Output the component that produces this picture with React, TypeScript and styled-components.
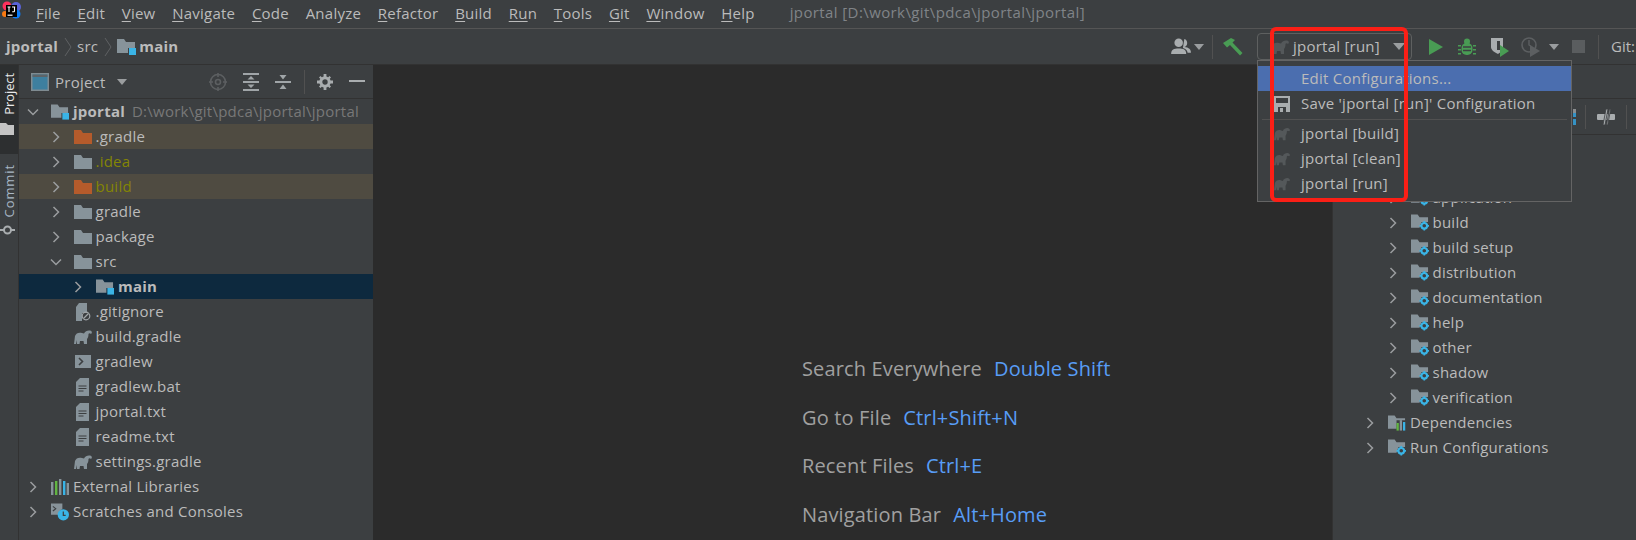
import React from "react";
import styled, { createGlobalStyle } from "styled-components";

const Global = createGlobalStyle`
  html, body { margin: 0; padding: 0; background: #3c3f41; overflow: hidden; }
  #root { width: 1636px; height: 540px; }
  * { box-sizing: border-box; }
`;

const Frame = styled.div`
  position: relative; width: 1636px; height: 540px; overflow: hidden;
  display: flex; flex-direction: column;
  background: #3c3f41; color: #bbbbbb;
  font-family: "Open Sans", "Noto Sans", sans-serif; font-size: 15px; letter-spacing: 0.24px;
`;
const MenuBar = styled.div`
  height: 29px; flex: none; display: flex; align-items: center; border-bottom: 1px solid #555555; padding-left: 2px;
`;
const LogoBox = styled.span`width: 20px; height: 20px; margin: 0 14px 6px 0; flex: none; display: flex;`;
const MenuList = styled.nav`display: flex; gap: 16.7px; padding-bottom: 3px;`;
const MenuItem = styled.span`u { text-underline-offset: 2px; }`;
const WindowTitle = styled.span`margin-left: 35px; color: #808488; padding-bottom: 4px; letter-spacing: 0.4px;`;

const NavBar = styled.div`
  height: 36px; flex: none; display: flex; align-items: center; border-bottom: 1px solid #323232; padding-left: 6px;
`;
const Crumb = styled.span<{ $bold?: boolean }>`
  font-weight: ${p => (p.$bold ? 700 : 400)}; white-space: nowrap; padding-bottom: 2px;
`;
const CrumbSep = styled.span`display: flex; width: 19px; justify-content: center; flex: none;`;
const CrumbMain = styled(Crumb)`margin-left: 3px;`;
const NavSpacer = styled.span`flex: 1;`;
const NavTools = styled.div`display: flex; align-items: center; height: 100%; width: 465px; flex: none;`;
const ToolSlot = styled.span<{ $w: number; $ml?: number }>`
  width: ${p => p.$w}px; margin-left: ${p => p.$ml ?? 0}px; flex: none; display: flex; align-items: center; justify-content: center;
`;
const ToolDivider = styled.span<{ $h?: number; $ml?: number }>`
  width: 1px; height: ${p => p.$h ?? 24}px; margin-left: ${p => p.$ml ?? 0}px; background: #515151; flex: none;
`;
const RunCombo = styled.div`
  width: 155px; height: 27px; flex: none; margin: 0 17px 0 14px; border: 1px solid #5e6060; border-radius: 4px;
  display: flex; align-items: center; padding-left: 13px; gap: 4px; white-space: nowrap;
`;
const ComboCaret = styled.span`
  width: 0; height: 0; margin-left: 9px; border-left: 6px solid transparent; border-right: 6px solid transparent; border-top: 7px solid #9a9d9f;
`;
const ComboText = styled.span`padding-bottom: 2px;`;
const GitLabel = styled.span`white-space: nowrap; margin-left: 12px; letter-spacing: 0; padding-bottom: 2px;`;

const Workspace = styled.div`flex: 1; display: flex; min-height: 0;`;
const LeftStrip = styled.aside`
  width: 19px; flex: none; display: flex; flex-direction: column; border-right: 1px solid #323232;
`;
const StripTab = styled.div<{ $active?: boolean; $h: number }>`
  height: ${p => p.$h}px; display: flex; flex-direction: column; align-items: flex-start; gap: 8px;
  padding-top: ${p => (p.$active ? 8 : 10)}px;
  background: ${p => (p.$active ? "#2d2f30" : "transparent")};
  color: ${p => (p.$active ? "#e8e8e8" : "#a9b7c6")};
`;
const StripLabel = styled.span<{ $spacing: number }>`
  writing-mode: vertical-rl; transform: rotate(180deg); font-size: 13px; line-height: 18px; letter-spacing: ${p => p.$spacing}px;
`;

const ProjectPanel = styled.section`width: 354px; flex: none; display: flex; flex-direction: column; overflow: hidden;`;
const PanelHeader = styled.header`
  height: 34px; flex: none; display: flex; align-items: center; border-bottom: 1px solid #323232; padding-left: 12px;
`;
const PanelTitle = styled.span`margin-left: 6px; width: 60px; white-space: nowrap;`;
const CaretSmall = styled.span`
  width: 0; height: 0; margin-left: 2px; border-left: 5px solid transparent; border-right: 5px solid transparent; border-top: 6px solid #9a9d9f;
`;
const HeaderSpacer = styled.span`flex: 1;`;
const HeaderTool = styled.span<{ $w: number }>`width: ${p => p.$w}px; flex: none; display: flex; justify-content: center;`;
const Tree = styled.div`display: flex; flex-direction: column;`;
const Row = styled.div<{ $base: number; $depth: number; $bg?: string }>`
  height: 25px; flex: none; display: flex; align-items: center; white-space: nowrap;
  padding-left: ${p => p.$base + p.$depth * 22.5}px;
  background: ${p => p.$bg ?? "transparent"};
`;
const ChevBox = styled.span`width: 22px; height: 25px; flex: none; display: flex; align-items: center; justify-content: center;`;
const IconBox = styled.span`width: 18px; margin-left: 7px; margin-right: 4px; flex: none; display: flex; justify-content: center;`;
const RowLabel = styled.span<{ $color?: string; $bold?: boolean }>`
  color: ${p => p.$color ?? "#bbbbbb"}; font-weight: ${p => (p.$bold ? 700 : 400)}; padding-bottom: 2px;
`;
const RowHint = styled.span`color: #787878; margin-left: 7px; padding-bottom: 2px;`;

const Editor = styled.main`
  width: 960px; flex: none; background: #2b2b2b; border-right: 1px solid #323232;
  display: flex; flex-direction: column; padding: 291px 0 0 429px; gap: 23.7px; overflow: hidden;
`;
const Hint = styled.div`font-size: 20px; letter-spacing: 0.15px; line-height: 25px; color: #a0a0a0; white-space: nowrap; display: flex; gap: 12px;`;
const Keys = styled.span`color: #589df6;`;

const GradlePanel = styled.section`flex: 1; display: flex; flex-direction: column; min-width: 0;`;
const GradleHead = styled.div`height: 34px; flex: none; border-bottom: 1px solid #323232;`;
const GradleBar = styled.div`
  height: 36px; flex: none; display: flex; align-items: center; border-bottom: 1px solid #323232; padding-left: 240px;
`;
const BlueMark = styled.span`width: 3px; height: 16px; background: linear-gradient(#8a8d8f 25%, #3592c4 25% 50%, #3c3f41 50% 62%, #3592c4 62%); flex: none;`;

const Popup = styled.div`
  position: absolute; left: 1257px; top: 60px; width: 315px; height: 142px; background: #3c3f41; border: 1px solid #646464;
  padding-top: 5px; display: flex; flex-direction: column;
`;
const PopupItem = styled.div<{ $active?: boolean }>`
  height: 25px; flex: none; display: flex; align-items: center; padding-left: 16px; gap: 11px; white-space: nowrap;
  background: ${p => (p.$active ? "#4b6eaf" : "transparent")};
`;
const PopupIcon = styled.span`width: 16px; flex: none; display: flex; justify-content: center;`;
const PopupText = styled.span`padding-bottom: 2px;`;
const PopupDivider = styled.div`height: 1px; background: #515151; margin: 3px 4px 1px;`;
const RedMark = styled.div`
  position: absolute; left: 1270px; top: 27px; width: 138px; height: 175px; border: 4px solid #fb1f16; border-radius: 6px; pointer-events: none;
`;

const Chevron = ({ open }: { open?: boolean }) => (
  <svg width="12" height="12" viewBox="0 0 12 12" fill="none" stroke="#9a9d9f" strokeWidth="1.5">
    <path d={open ? "M1 3.5 6 8.5 11 3.5" : "M3.5 1 8.5 6 3.5 11"} />
  </svg>
);
const FolderShape = ({ fill = "#87939a" }: { fill?: string }) => (
  <svg width="18" height="14" viewBox="0 0 18 14"><path d="M0 0h7l2 3h9v11H0z" fill={fill} /></svg>
);
const ModuleFolder = () => (
  <svg width="19" height="16" viewBox="0 0 19 16">
    <path d="M0 0h7l2 3h9v6h-7v5H0z" fill="#87939a" />
    <rect x="12" y="9" width="7" height="7" fill="#3ab4e6" />
  </svg>
);
const Gear = ({ x, y }: { x: number; y: number }) => (
  <g transform={`translate(${x} ${y})`}>
    <circle r="3" fill="none" stroke="#3ab4e6" strokeWidth="2.2" />
    <path d="M-.9-5h1.8v2h-1.8zM-.9 3h1.8v2h-1.8zM-5-.9h2v1.8h-2zM3-.9h2v1.8h-2z" fill="#3ab4e6" />
  </g>
);
const TaskFolder = () => (
  <svg width="19" height="17" viewBox="0 0 19 17">
    <path d="M0 0h7l2 3h9v5h-7l-2 6H0z" fill="#87939a" />
    <Gear x={14} y={12} />
  </svg>
);
const DepsFolder = () => (
  <svg width="19" height="16" viewBox="0 0 19 16">
    <path d="M0 0h7l2 3h9v2h-9v9H0z" fill="#87939a" />
    <rect x="9" y="8" width="2.4" height="8" fill="#62b543" />
    <rect x="12.4" y="5" width="2.4" height="11" fill="#87939a" />
    <rect x="15.8" y="7" width="2.4" height="9" fill="#3ab4e6" />
  </svg>
);
const Elephant = ({ fill = "#87939a", w = 18 }: { fill?: string; w?: number }) => (
  <svg width={w} height={(w * 14) / 18} viewBox="0 0 18 14">
    <path
      d="M0 14 1 6C2 3 5 2 8 3L10 3.500C11 1 14 0 16 .5 18 1 18.500 3 17 4 16 3 15 3 14.500 4 14.500 6 14 8 13 9L13 14H10L9.500 11H6L5.500 14H3L3 10 2 14Z"
      fill={fill}
    />
  </svg>
);
const TextFile = () => (
  <svg width="13" height="18" viewBox="0 0 13 18">
    <path d="M4 0h9v18H0V4z" fill="#87939a" />
    <path d="M2.5 8h8M2.5 10.5h8M2.5 13h5" stroke="#3c3f41" strokeWidth="1" />
  </svg>
);
const IgnoreFile = () => (
  <svg width="16" height="18" viewBox="0 0 16 18">
    <path d="M4 0h8v10H7v8H1V4z" fill="#87939a" />
    <circle cx="11" cy="13" r="3.8" fill="none" stroke="#a0a5a8" strokeWidth="1.2" />
    <path d="M8.5 15.5 13.5 10.5" stroke="#a0a5a8" strokeWidth="1.2" />
  </svg>
);
const ShellFile = () => (
  <svg width="16" height="13" viewBox="0 0 16 13">
    <rect width="16" height="13" fill="#87939a" />
    <path d="M4 3l3.5 3.5L4 10" stroke="#3c3f41" strokeWidth="1.6" fill="none" />
  </svg>
);
const LibIcon = () => (
  <svg width="18" height="16" viewBox="0 0 18 16">
    <rect x="0" y="3" width="2.4" height="13" fill="#87939a" />
    <rect x="4" y="2" width="2.4" height="14" fill="#62b543" />
    <rect x="8" y="0" width="2.4" height="16" fill="#87939a" />
    <rect x="12" y="2" width="2.4" height="14" fill="#3ab4e6" />
    <rect x="15.6" y="4" width="2.4" height="12" fill="#87939a" />
  </svg>
);
const ScratchIcon = () => (
  <svg width="19" height="18" viewBox="0 0 19 18">
    <path d="M0 0h12v6a6 6 0 0 0-4 6H0z" fill="#87939a" />
    <path d="M2 3l3 2.5L2 8" stroke="#3c3f41" strokeWidth="1.2" fill="none" />
    <circle cx="13" cy="12" r="6" fill="#3ab4e6" />
    <path d="M13 8.5V12.5H15.5" stroke="#3c3f41" strokeWidth="1.3" fill="none" />
  </svg>
);
const Logo = () => (
  <svg width="20" height="20" viewBox="0 0 20 20">
    <circle cx="5" cy="5" r="4.500" fill="#fe315d" />
    <circle cx="14" cy="6" r="5" fill="#5a63d8" />
    <circle cx="3" cy="13" r="3" fill="#f97a12" />
    <circle cx="14" cy="13" r="4.500" fill="#087cfa" />
    <rect x="4" y="4" width="11" height="12" fill="#000" />
    <rect x="5.5" y="13.6" width="5" height="1.2" fill="#fff" />
    <path d="M5.500 6h3M7 6v5M10 6h3.200M12.500 6v3.700c0 1-.6 1.300-2.300 1" stroke="#fff" strokeWidth="1.100" fill="none" />
  </svg>
);
const ProjectIcon = () => (
  <svg width="18" height="18" viewBox="0 0 18 18">
    <rect x=".75" y=".75" width="16.5" height="16.5" fill="#3d7f9f" stroke="#7f8b91" strokeWidth="1.5" />
    <rect x="1.5" y="1.5" width="15" height="2.5" fill="#5d6468" />
  </svg>
);
const Locate = () => (
  <svg width="18" height="18" viewBox="0 0 18 18" fill="none" stroke="#5c5f61" strokeWidth="1.6">
    <circle cx="9" cy="9" r="7.5" /><circle cx="9" cy="9" r="2.5" />
    <path d="M9 0v4M9 14v4M0 9h4M14 9h4" />
  </svg>
);
const ExpandAll = () => (
  <svg width="16" height="18" viewBox="0 0 16 18" fill="#a0a5a8">
    <rect width="16" height="2" /><rect y="16" width="16" height="2" /><rect y="8" width="16" height="2" />
    <path d="M8 3l3.5 3.5h-7zM8 15l3.5-3.5h-7z" />
  </svg>
);
const CollapseAll = () => (
  <svg width="16" height="18" viewBox="0 0 16 18" fill="#a0a5a8">
    <rect y="8" width="16" height="2" />
    <path d="M4.5 2 8 6.5 11.5 2zM4.5 16 8 11.5 11.5 16z" />
  </svg>
);
const Cog = ({ size = 16 }: { size?: number }) => (
  <svg width={size} height={size} viewBox="0 0 16 16">
    <circle cx="8" cy="8" r="4.2" fill="none" stroke="#a9adaf" strokeWidth="3" />
    <path d="M6.6 0h2.8v3H6.6zM6.6 13h2.8v3H6.6zM0 6.6h3v2.8H0zM13 6.6h3v2.8h-3zM2 3.5 3.5 2l2 2L4 5.500zM10.500 12l1.500-1.500 2 2-1.500 1.500zM12.500 2 14 3.500l-2 2L10.500 4zM4 10.500 5.500 12l-2 2L2 12.500z" fill="#a9adaf" />
  </svg>
);
const Minus = () => <svg width="16" height="3" viewBox="0 0 16 3"><rect width="16" height="2" fill="#a9adaf" /></svg>;
const Person = () => (
  <svg width="21" height="17" viewBox="0 0 22 18" fill="#a9adaf">
    <circle cx="8" cy="5" r="4.500" /><path d="M0 17c0-5 3-6 8-6s8 1 8 6z" />
    <path d="M14 1a4.500 4.500 0 0 1 0 8.500c5 .5 7 2.500 7 6h-3.500c-.5-2.500-2-4-5-5z" />
  </svg>
);
const Hammer = () => (
  <svg width="20" height="18" viewBox="0 0 20 18" fill="#499c54">
    <path d="M0 5 8 0l4 2-2.500 2.500L19.500 15 17 17.500 7 7 4 9.500z" />
  </svg>
);
const RunIcon = () => <svg width="14" height="16" viewBox="0 0 14 16"><path d="M0 0l14 8L0 16z" fill="#499c54" /></svg>;
const BugIcon = () => (
  <svg width="18" height="18" viewBox="0 0 18 18" fill="#499c54">
    <rect x="3.500" y="5" width="11" height="12" rx="5" />
    <circle cx="9" cy="3.500" r="3" />
    <path d="M0 7h3v1.500H0zM15 7h3v1.500h-3zM0 11h3v1.500H0zM15 11h3v1.500h-3zM0 15h3v1.500H0zM15 15h3v1.500h-3z" />
    <path d="M5 9h8M5 12.500h8" stroke="#3c3f41" strokeWidth="1.300" />
  </svg>
);
const Coverage = () => (
  <svg width="20" height="20" viewBox="0 0 20 20">
    <path d="M1 1h12v9c0 3-2 5-5 7C4 15 1 13 1 10z" fill="#a9adaf" />
    <path d="M7 4h3v9H7z" fill="#3c3f41" />
    <path d="M10 8l9 6-9 6z" fill="#499c54" />
  </svg>
);
const Profile = () => (
  <svg width="20" height="20" viewBox="0 0 20 20" fill="none">
    <circle cx="8" cy="8" r="7" stroke="#5c5f61" strokeWidth="1.600" />
    <path d="M8 3v5l3 2" stroke="#5c5f61" strokeWidth="1.400" />
    <path d="M9 8l10 6-10 6z" fill="#5c5f61" />
  </svg>
);
const Stop = () => <svg width="13" height="13" viewBox="0 0 13 13"><rect width="13" height="13" fill="#5a5d5f" /></svg>;
const Floppy = () => (
  <svg width="16" height="16" viewBox="0 0 16 16">
    <path d="M0 0h16v16H0z" fill="#a9adaf" />
    <rect x="2" y="2" width="12" height="5" fill="#3c3f41" />
    <rect x="4" y="11" width="8" height="5" fill="#3c3f41" />
    <rect x="6" y="12" width="3" height="4" fill="#a9adaf" />
  </svg>
);
const NoLink = () => (
  <svg width="18" height="18" viewBox="0 0 18 18" fill="#a9adaf">
    <rect x="0" y="6" width="18" height="6" rx="1" />
    <path d="M6 17 9 1h2L8 17zM9.500 17 12.500 1h1.200l-3 16z" stroke="#3c3f41" strokeWidth=".8" />
  </svg>
);
const StripFolder = () => <svg width="14" height="12" viewBox="0 0 14 12"><path d="M0 0h6l2 2h6v10H0z" fill="#c4c4c4" /></svg>;
const StripCommit = () => (
  <svg width="15" height="10" viewBox="0 0 15 10" fill="none" stroke="#a9adaf" strokeWidth="2">
    <circle cx="7.500" cy="5" r="3.500" /><path d="M0 5h4M11 5h4" />
  </svg>
);
const Breadcrumb = () => (
  <svg width="8" height="18" viewBox="0 0 8 18" fill="none" stroke="#5f6264" strokeWidth="1"><path d="M1 0l6 9-6 9" /></svg>
);

type Node = {
  label: string; depth: number; icon: React.ReactNode; chev?: "open" | "closed"; color?: string; bold?: boolean; bg?: string; hint?: string;
};
const TINT = "#4f4b41";
const OLIVE = "#848504";
const RUST = "#b55b2b";
const projectNodes: Node[] = [
  { label: "jportal", depth: 0, icon: <ModuleFolder />, chev: "open", bold: true, hint: "D:\\work\\git\\pdca\\jportal\\jportal" },
  { label: ".gradle", depth: 1, icon: <FolderShape fill={RUST} />, chev: "closed", bg: TINT },
  { label: ".idea", depth: 1, icon: <FolderShape />, chev: "closed", color: OLIVE },
  { label: "build", depth: 1, icon: <FolderShape fill={RUST} />, chev: "closed", color: OLIVE, bg: TINT },
  { label: "gradle", depth: 1, icon: <FolderShape />, chev: "closed" },
  { label: "package", depth: 1, icon: <FolderShape />, chev: "closed" },
  { label: "src", depth: 1, icon: <FolderShape />, chev: "open" },
  { label: "main", depth: 2, icon: <ModuleFolder />, chev: "closed", bold: true, bg: "#0d293e" },
  { label: ".gitignore", depth: 1, icon: <IgnoreFile /> },
  { label: "build.gradle", depth: 1, icon: <Elephant /> },
  { label: "gradlew", depth: 1, icon: <ShellFile /> },
  { label: "gradlew.bat", depth: 1, icon: <TextFile /> },
  { label: "jportal.txt", depth: 1, icon: <TextFile /> },
  { label: "readme.txt", depth: 1, icon: <TextFile /> },
  { label: "settings.gradle", depth: 1, icon: <Elephant /> },
  { label: "External Libraries", depth: 0, icon: <LibIcon />, chev: "closed" },
  { label: "Scratches and Consoles", depth: 0, icon: <ScratchIcon />, chev: "closed" },
];
const gradleNodes: Node[] = [
  { label: "jportal", depth: 0, icon: <ModuleFolder />, chev: "open" },
  { label: "Tasks", depth: 0.5, icon: <FolderShape />, chev: "open" },
  ...["application", "build", "build setup", "distribution", "documentation", "help", "other", "shadow", "verification"].map(
    (label): Node => ({ label, depth: 1, icon: <TaskFolder />, chev: "closed" })
  ),
  { label: "Dependencies", depth: 0, icon: <DepsFolder />, chev: "closed" },
  { label: "Run Configurations", depth: 0, icon: <TaskFolder />, chev: "closed" },
];

const TreeView = ({ nodes, base }: { nodes: Node[]; base: number }) => (
  <Tree>
    {nodes.map(n => (
      <Row key={n.label + n.depth} $base={base} $depth={n.depth} $bg={n.bg}>
        <ChevBox>{n.chev && <Chevron open={n.chev === "open"} />}</ChevBox>
        <IconBox>{n.icon}</IconBox>
        <RowLabel $color={n.color} $bold={n.bold}>{n.label}</RowLabel>
        {n.hint && <RowHint>{n.hint}</RowHint>}
      </Row>
    ))}
  </Tree>
);

const menus: [string, string][] = [
  ["F", "ile"], ["E", "dit"], ["V", "iew"], ["N", "avigate"], ["C", "ode"], ["", "Analyze"], ["R", "efactor"],
  ["B", "uild"], ["Ru", "n"], ["T", "ools"], ["G", "it"], ["W", "indow"], ["H", "elp"],
];
const hints = [
  ["Search Everywhere", "Double Shift"],
  ["Go to File", "Ctrl+Shift+N"],
  ["Recent Files", "Ctrl+E"],
  ["Navigation Bar", "Alt+Home"],
];

export default function App() {
  return (
    <Frame>
      <Global />
      <MenuBar>
        <LogoBox><Logo /></LogoBox>
        <MenuList>
          {menus.map(([u, rest]) => (
            <MenuItem key={u + rest}>{u && <u>{u}</u>}{rest}</MenuItem>
          ))}
        </MenuList>
        <WindowTitle>jportal [D:\work\git\pdca\jportal\jportal]</WindowTitle>
      </MenuBar>
      <NavBar>
        <Crumb $bold>jportal</Crumb>
        <CrumbSep><Breadcrumb /></CrumbSep>
        <Crumb>src</Crumb>
        <CrumbSep><Breadcrumb /></CrumbSep>
        <ModuleFolder />
        <CrumbMain $bold>main</CrumbMain>
        <NavSpacer />
        <NavTools>
          <ToolSlot $w={21}><Person /></ToolSlot>
          <ToolSlot $w={12}><CaretSmall /></ToolSlot>
          <ToolDivider $ml={8} />
          <ToolSlot $w={20} $ml={10}><Hammer /></ToolSlot>
          <RunCombo>
            <Elephant fill="#54585a" />
            <ComboText>jportal [run]</ComboText>
            <ComboCaret />
          </RunCombo>
          <ToolSlot $w={14}><RunIcon /></ToolSlot>
          <ToolSlot $w={18} $ml={15}><BugIcon /></ToolSlot>
          <ToolSlot $w={20} $ml={14}><Coverage /></ToolSlot>
          <ToolSlot $w={20} $ml={11}><Profile /></ToolSlot>
          <ToolSlot $w={14} $ml={5}><CaretSmall /></ToolSlot>
          <ToolSlot $w={13} $ml={12}><Stop /></ToolSlot>
          <ToolDivider $ml={13} />
          <GitLabel>Git:</GitLabel>
        </NavTools>
      </NavBar>
      <Workspace>
        <LeftStrip>
          <StripTab $active $h={89}>
            <StripLabel $spacing={-0.1}>Project</StripLabel>
            <StripFolder />
          </StripTab>
          <StripTab $h={90}>
            <StripLabel $spacing={0.9}>Commit</StripLabel>
            <StripCommit />
          </StripTab>
        </LeftStrip>
        <ProjectPanel>
          <PanelHeader>
            <ProjectIcon />
            <PanelTitle>Project</PanelTitle>
            <CaretSmall />
            <HeaderSpacer />
            <HeaderTool $w={32}><Locate /></HeaderTool>
            <HeaderTool $w={33}><ExpandAll /></HeaderTool>
            <HeaderTool $w={32}><CollapseAll /></HeaderTool>
            <HeaderTool $w={5} />
            <ToolDivider />
            <HeaderTool $w={40}><Cog /></HeaderTool>
            <HeaderTool $w={24}><Minus /></HeaderTool>
            <HeaderTool $w={4} />
          </PanelHeader>
          <TreeView nodes={projectNodes} base={3} />
        </ProjectPanel>
        <Editor>
          {hints.map(([a, b]) => (
            <Hint key={a}>{a}<Keys>{b}</Keys></Hint>
          ))}
        </Editor>
        <GradlePanel>
          <GradleHead />
          <GradleBar>
            <BlueMark />
            <HeaderTool $w={9} />
            <ToolDivider />
            <HeaderTool $w={40}><NoLink /></HeaderTool>
            <ToolDivider />
          </GradleBar>
          <TreeView nodes={gradleNodes} base={26} />
        </GradlePanel>
      </Workspace>
      <Popup>
        <PopupItem $active><PopupIcon /><PopupText>Edit Configurations...</PopupText></PopupItem>
        <PopupItem><PopupIcon><Floppy /></PopupIcon><PopupText>Save 'jportal [run]' Configuration</PopupText></PopupItem>
        <PopupDivider />
        {["build", "clean", "run"].map(k => (
          <PopupItem key={k}><PopupIcon><Elephant fill="#54585a" /></PopupIcon><PopupText>jportal [{k}]</PopupText></PopupItem>
        ))}
      </Popup>
      <RedMark />
    </Frame>
  );
}
